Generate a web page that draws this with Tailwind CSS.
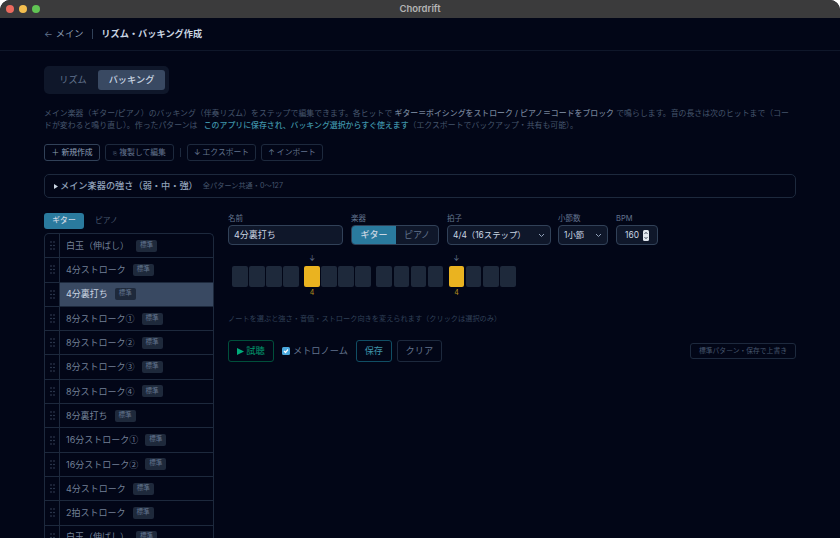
<!DOCTYPE html>
<html lang="ja">
<head>
    <meta charset="UTF-8">
    <title>Chordrift</title>
    <script src="https://cdn.jsdelivr.net/npm/@tailwindcss/browser@4"></script>
</head>
<body class="bg-white font-['Inter','Noto_Sans_CJK_JP',sans-serif]">
<div id="window" class="h-[538px] w-[840px] overflow-hidden rounded-t-[10px] bg-[#020617] text-slate-300">
    <!-- title bar -->
    <div class="relative flex h-[18px] items-center justify-center bg-[#3b3b3c]">
        <div class="absolute left-[6px] top-[5px] flex gap-[5px]">
            <span class="size-[8px] rounded-full bg-[#ec6a5e]"></span>
            <span class="size-[8px] rounded-full bg-[#f4bf4f]"></span>
            <span class="size-[8px] rounded-full bg-[#61c554]"></span>
        </div>
        <span class="text-[9.500px] font-semibold text-[#b4b4b4]">Chordrift</span>
    </div>

    <header class="flex h-[33px] items-center border-b border-[#0f172a] px-[44px] text-[9.200px]">
        <span class="text-slate-500">←</span>
        <span class="ml-[3px] text-slate-400">メイン</span>
        <span class="mx-[8.500px] h-[10px] w-px bg-slate-700"></span>
        <span class="font-semibold text-slate-300">リズム・バッキング作成</span>
    </header>

    <main class="px-[44px] pt-[15px]">
        <div class="flex h-[28px] w-[125px] items-center rounded-[5px] bg-[#0f172a] px-[4px] text-[9.200px]">
            <span class="w-[50px] text-center text-slate-500">リズム</span>
            <span class="flex h-[20px] w-[67px] items-center justify-center rounded-[3px] bg-[#394962] font-medium text-slate-300">バッキング</span>
        </div>

        <p class="mt-[13px] w-[752px] text-[7.900px] leading-[12px] text-slate-600">メイン楽器（ギター/ピアノ）のバッキング（伴奏リズム）をステップで編集できます。各ヒットで <span class="font-medium text-slate-400/80">ギター＝ボイシングをストローク / ピアノ＝コードをブロック</span> で鳴らします。音の長さは次のヒットまで（コードが変わると鳴り直し）。作ったパターンは <span class="ml-[4px] font-medium text-[#3f93a8]">このアプリに保存され、バッキング選択からすぐ使えます</span>（エクスポートでバックアップ・共有も可能）。</p>

        <div class="mt-[13px] flex items-center text-[7.800px]">
            <button class="h-[17px] w-[56px] rounded-[3px] border border-slate-700 text-slate-400">＋ 新規作成</button>
            <button class="ml-[5px] h-[17px] w-[69px] rounded-[3px] border border-slate-800 text-slate-500"><span class="text-[5px]">⎘</span> 複製して編集</button>
            <span class="mx-[6px] h-[9px] w-px bg-slate-800"></span>
            <button class="h-[17px] w-[69px] rounded-[3px] border border-slate-800 text-slate-500">↓ エクスポート</button>
            <button class="ml-[5px] h-[17px] w-[62px] rounded-[3px] border border-slate-800 text-slate-500">↑ インポート</button>
        </div>

        <div class="mt-[13px] flex h-[24px] items-center rounded-[5px] border border-slate-800 pl-[9px]">
            <svg class="h-[5px] w-[4px] fill-slate-300" viewBox="0 0 4 5"><path d="M0 0l4 2.500L0 5z"/></svg>
            <span class="ml-[2px] text-[9.200px] font-medium text-slate-400">メイン楽器の強さ（弱・中・強）</span>
            <span class="ml-[5px] text-[7.200px] text-slate-600">全パターン共通・0〜127</span>
        </div>

        <div class="mt-[15px] flex gap-[14px]">
            <!-- pattern list -->
            <aside class="w-[170px] shrink-0">
                <div class="flex h-[16px] items-center text-[7.800px]">
                    <span class="flex h-[16px] w-[40px] items-center justify-center rounded-[3px] bg-[#2a7a9e] font-medium text-slate-300">ギター</span>
                    <span class="ml-[11px] text-slate-600">ピアノ</span>
                </div>
                <ul id="patterns" class="mt-[4px] rounded-t-[5px] border border-b-0 border-slate-800 text-[9px]"></ul>
            </aside>

            <!-- editor -->
            <section class="flex-1">
                <div class="flex gap-[8px]">
                    <label class="block w-[115px]">
                        <span class="block h-[12px] text-[7.500px] leading-[12px] text-slate-500">名前</span>
                        <span class="flex h-[20px] items-center rounded-[4px] border border-slate-700 bg-[#0f172a] pl-[5px] text-[9px] text-slate-300">4分裏打ち</span>
                    </label>
                    <div class="w-[88px]">
                        <span class="block h-[12px] text-[7.500px] leading-[12px] text-slate-500">楽器</span>
                        <div class="flex h-[20px] overflow-hidden rounded-[4px] border border-slate-700 bg-[#0f172a] text-[9px]">
                            <span class="flex w-[44px] items-center justify-center bg-[#2a7a9e] font-medium text-slate-300">ギター</span>
                            <span class="flex flex-1 items-center justify-center text-slate-500">ピアノ</span>
                        </div>
                    </div>
                    <div class="w-[104px]">
                        <span class="block h-[12px] text-[7.500px] leading-[12px] text-slate-500">拍子</span>
                        <span class="flex h-[20px] items-center justify-between rounded-[4px] border border-slate-700 bg-[#0f172a] px-[5px] text-[8.400px] text-slate-300">4/4（16ステップ）
                            <svg class="h-[5px] w-[7px] stroke-slate-400" viewBox="0 0 7 5" fill="none"><path d="M1 1l2.500 2.500L6 1"/></svg></span>
                    </div>
                    <div class="-ml-[1px] w-[50px]">
                        <span class="block h-[12px] text-[7.500px] leading-[12px] text-slate-500">小節数</span>
                        <span class="flex h-[20px] items-center justify-between rounded-[4px] border border-slate-700 bg-[#0f172a] px-[5px] text-[8.400px] text-slate-300">1小節
                            <svg class="h-[5px] w-[7px] stroke-slate-400" viewBox="0 0 7 5" fill="none"><path d="M1 1l2.500 2.500L6 1"/></svg></span>
                    </div>
                    <div class="w-[42px]">
                        <span class="block h-[12px] text-[7.500px] leading-[12px] text-slate-500">BPM</span>
                        <span class="flex h-[20px] items-center justify-end gap-[4px] rounded-[4px] border border-slate-700 bg-[#0f172a] pr-[8px] text-[8.400px] text-slate-300">160
                            <svg class="h-[11px] w-[6px]" viewBox="0 0 6 11"><rect width="6" height="11" rx="1.500" fill="#e2e8f0"/><path d="M1.500 4L3 2.300 4.500 4M1.500 7L3 8.700 4.500 7" fill="none" stroke="#1e293b" stroke-width=".8"/></svg></span>
                    </div>
                </div>

                <div id="steps" class="mt-[11px] ml-[4px] flex gap-[5.300px]"></div>

                <p class="mt-[17px] text-[7.200px] leading-[10px] text-slate-700">ノートを選ぶと強さ・音価・ストローク向きを変えられます（クリックは選択のみ）</p>

                <div class="mt-[16px] flex items-center text-[9.200px]">
                    <button class="flex h-[22px] w-[46px] items-center justify-center gap-[2px] rounded-[3px] border border-emerald-900 text-emerald-400/70">
                        <svg class="h-[7px] w-[7px] fill-emerald-400/80" viewBox="0 0 7 7"><path d="M0 0l7 3.500L0 7z"/></svg>試聴</button>
                    <span class="ml-[8px] flex size-[8px] items-center justify-center rounded-[1.500px] bg-[#4aa8dc]">
                        <svg class="h-[6px] w-[6px]" viewBox="0 0 6 6" fill="none" stroke="#fff" stroke-width="1.200"><path d="M1 3l1.500 1.500L5 1.500"/></svg></span>
                    <span class="ml-[3px] text-slate-500">メトロノーム</span>
                    <button class="ml-[8px] h-[22px] w-[36px] rounded-[3px] border border-cyan-900 text-[#3f93a8]">保存</button>
                    <button class="ml-[5px] h-[22px] w-[45px] rounded-[3px] border border-slate-800 text-slate-500">クリア</button>
                    <button class="ml-auto h-[16px] w-[106px] rounded-[3px] border border-slate-800 text-[6.800px] text-slate-600">標準パターン・保存で上書き</button>
                </div>
            </section>
        </div>
    </main>
</div>

<script>
    const patterns = ['白玉（伸ばし）', '4分ストローク', '4分裏打ち', '8分ストローク①', '8分ストローク②', '8分ストローク③', '8分ストローク④', '8分裏打ち', '16分ストローク①', '16分ストローク②', '4分ストローク', '2拍ストローク', '白玉（伸ばし）'];
    const grip = '<svg class="h-[9px] w-[5px] fill-slate-600" viewBox="0 0 5 9"><circle cx="1" cy="1" r=".7"/><circle cx="4" cy="1" r=".7"/><circle cx="1" cy="4.500" r=".7"/><circle cx="4" cy="4.500" r=".7"/><circle cx="1" cy="8" r=".7"/><circle cx="4" cy="8" r=".7"/></svg>';
    // Inter's circled digits are too heavy, use the CJK ones
    const label = (name) => name.replace(/[①-④]/, m => `<span class="font-['Noto_Sans_CJK_JP']">${m}</span>`);
    document.getElementById('patterns').innerHTML = patterns.map((name, i) => {
        const selected = i === 2;
        return `<li class="flex h-[24.300px] border-b border-slate-800">
            <span class="flex w-[15px] shrink-0 items-center justify-center border-r border-slate-800">${grip}</span>
            <span class="flex flex-1 items-center gap-[7px] pl-[6px] ${selected ? 'bg-[#394962] text-slate-300' : 'text-slate-400/80'}"><span>${label(name)}</span>
                <span class="flex h-[12px] w-[21px] items-center justify-center rounded-[2px] bg-[#1e293b] text-[6.500px] text-slate-500">標準</span></span>
        </li>`;
    }).join('');

    // 16 steps in beats of 4, hits on the 5th and the 13th
    const stepHtml = (on) => `<div class="-mt-[1px] flex w-[15.700px] flex-col items-center">
        <span class="h-[11px] text-[7px] leading-[7px] text-slate-500">${on ? '↓' : ''}</span>
        <span class="h-[21px] w-full rounded-[2px] ${on ? 'bg-[#eab320]' : 'bg-[#1e293b]'}"></span>
        <span class="mt-[1px] h-[9px] text-[7px] leading-[9px] text-[#b8901c]">${on ? '4' : ''}</span>
    </div>`;
    const beat = (start) => '<div class="flex gap-[1.400px]">' + [0, 1, 2, 3].map(i => stepHtml(start + i === 4 || start + i === 12)).join('') + '</div>';
    document.getElementById('steps').innerHTML = [0, 4, 8, 12].map(beat).join('');
</script>
</body>
</html>
